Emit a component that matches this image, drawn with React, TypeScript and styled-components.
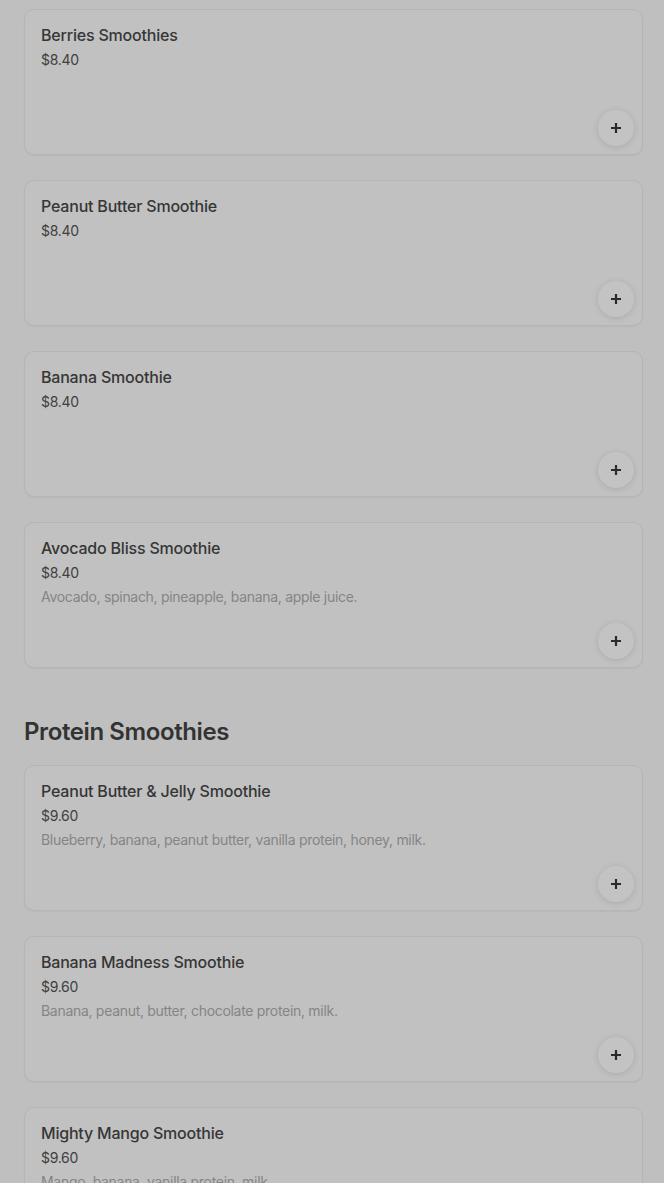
import React from 'react';
import styled, { createGlobalStyle } from 'styled-components';

type Item = {
  name: string;
  price: string;
  description?: string;
};

const GlobalStyle = createGlobalStyle`
  html, body {
    margin: 0;
    padding: 0;
    background: #bfbfbf;
  }
  body {
    font-family: Inter, 'Liberation Sans', sans-serif;
    color: #333333;
  }
`;

const Page = styled.div`
  padding: 9px 21px 40px 24px;
  display: flex;
  flex-direction: column;
`;

const Section = styled.section`
  display: flex;
  flex-direction: column;
  gap: 25px;
`;

const SectionTitle = styled.h2`
  margin: 48px 0 -8px;
  font-size: 24px;
  font-weight: 600;
  line-height: 32px;
  letter-spacing: -0.4px;
  color: #333333;
`;

const Card = styled.div`
  box-sizing: border-box;
  height: 146px;
  border: 1px solid #b5b5b5;
  border-radius: 10px;
  background: #c1c1c1;
  box-shadow: 0 1px 2px rgba(0, 0, 0, 0.04);
  padding: 15px 8px 8px 16px;
  display: flex;
  flex-direction: column;
`;

const Name = styled.div`
  font-size: 16px;
  font-weight: 500;
  line-height: 20px;
  letter-spacing: -0.2px;
  color: #363636;
`;

const Price = styled.div`
  margin-top: 5px;
  font-size: 14px;
  line-height: 20px;
  letter-spacing: -0.3px;
  color: #404040;
`;

const Description = styled.div`
  margin-top: 4px;
  font-size: 14px;
  font-weight: 400;
  line-height: 20px;
  letter-spacing: -0.3px;
  color: #858585;
`;

const AddButton = styled.button`
  margin-top: auto;
  align-self: flex-end;
  width: 36px;
  height: 36px;
  border-radius: 50%;
  border: none;
  background: #c3c3c3;
  box-shadow: 0 1px 6px rgba(0, 0, 0, 0.12);
  display: flex;
  align-items: center;
  justify-content: center;
  padding: 0;
  cursor: pointer;
`;

const PlusIcon = () => (
  <svg width="12" height="12" viewBox="0 0 12 12">
    <path d="M6 1v10M1 6h10" stroke="#2a2a2a" strokeWidth="2.2" />
  </svg>
);

const MenuCard: React.FC<{ item: Item }> = ({ item }) => (
  <Card>
    <Name>{item.name}</Name>
    <Price>{item.price}</Price>
    {item.description && <Description>{item.description}</Description>}
    <AddButton aria-label={`Add ${item.name}`}>
      <PlusIcon />
    </AddButton>
  </Card>
);

const smoothies: Item[] = [
  { name: 'Berries Smoothies', price: '$8.40' },
  { name: 'Peanut Butter Smoothie', price: '$8.40' },
  { name: 'Banana Smoothie', price: '$8.40' },
  {
    name: 'Avocado Bliss Smoothie',
    price: '$8.40',
    description: 'Avocado, spinach, pineapple, banana, apple juice.',
  },
];

const proteinSmoothies: Item[] = [
  {
    name: 'Peanut Butter & Jelly Smoothie',
    price: '$9.60',
    description: 'Blueberry, banana, peanut butter, vanilla protein, honey, milk.',
  },
  {
    name: 'Banana Madness Smoothie',
    price: '$9.60',
    description: 'Banana, peanut, butter, chocolate protein, milk.',
  },
  {
    name: 'Mighty Mango Smoothie',
    price: '$9.60',
    description: 'Mango, banana, vanilla protein, milk.',
  },
];

export default function App() {
  return (
    <>
      <GlobalStyle />
      <Page>
        <Section>
          {smoothies.map((item) => (
            <MenuCard key={item.name} item={item} />
          ))}
        </Section>
        <Section>
          <SectionTitle>Protein Smoothies</SectionTitle>
          {proteinSmoothies.map((item) => (
            <MenuCard key={item.name} item={item} />
          ))}
        </Section>
      </Page>
    </>
  );
}
